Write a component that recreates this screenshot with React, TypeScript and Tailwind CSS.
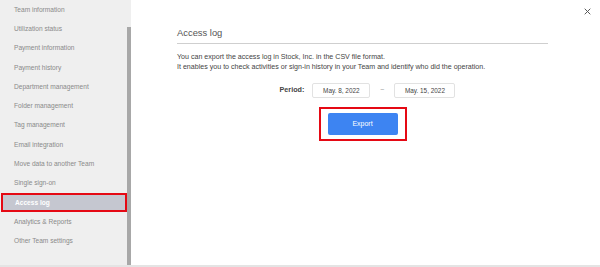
const menuItems = [
  "Team information",
  "Utilization status",
  "Payment information",
  "Payment history",
  "Department management",
  "Folder management",
  "Tag management",
  "Email integration",
  "Move data to another Team",
  "Single sign-on",
  "Access log",
  "Analytics & Reports",
  "Other Team settings",
];

export default function App() {
  const active = "Access log";

  return (
    <div
      className="flex h-[267px] w-[600px] overflow-hidden bg-white border-b-2 border-[#e4e4e4]"
      style={{ fontFamily: '"Liberation Sans", Arial, sans-serif' }}
    >
      {/* Sidebar */}
      <div className="relative flex w-[131px] shrink-0 bg-[#efefef]">
        <ul className="flex w-[127px] flex-col">
          {menuItems.map((item) =>
            item === active ? (
              <li
                key={item}
                className="ml-px flex h-[19.3px] items-center border-2 border-[#e50914] bg-[#c5c7d0] pl-[12px] text-[6.6px] font-bold text-white"
              >
                {item}
              </li>
            ) : (
              <li
                key={item}
                className="flex h-[19.3px] items-center pl-[14px] text-[6.6px] text-[#8a8a8a]"
              >
                {item}
              </li>
            )
          )}
        </ul>
        <div className="mt-[27px] w-[4px] bg-[#a8a8a8]" />
      </div>

      {/* Main */}
      <div className="relative flex-1">
        <button className="absolute right-[9px] top-[7px] flex h-[8px] w-[8px] items-center justify-center text-[#555]">
          <svg viewBox="0 0 10 10" className="h-[7px] w-[7px]">
            <path d="M1 1 L9 9 M9 1 L1 9" stroke="currentColor" strokeWidth="1.4" />
          </svg>
        </button>

        <div className="ml-[46px] mt-[27px] w-[371px]">
          <h2 className="border-b border-[#cfcfcf] pb-[4px] text-[9.4px] leading-[12px] text-[#555]">
            Access log
          </h2>
          <div className="mt-[8px] text-[7.1px] leading-[10px] text-[#444]">
            <p>You can export the access log in Stock, Inc. in the CSV file format.</p>
            <p>It enables you to check activities or sign-in history in your Team and identify who did the operation.</p>
          </div>

          <div className="mt-[11px] flex items-center justify-center pl-[10px]">
            <span className="mr-[8px] text-[7.2px] font-bold text-[#444]">Period:</span>
            <div className="flex h-[15px] w-[58px] items-center justify-center rounded-[2px] border border-[#e2e2e2] text-[6.4px] text-[#444]">
              May. 8, 2022
            </div>
            <span className="mx-[10px] text-[7px] text-[#999]">~</span>
            <div className="flex h-[15px] w-[61px] items-center justify-center rounded-[2px] border border-[#e2e2e2] text-[6.4px] text-[#444]">
              May. 15, 2022
            </div>
          </div>

          <div className="mt-[9px] flex justify-center">
            <div className="border-2 border-[#e50914] px-[7px] py-[4px]">
              <button className="flex h-[22px] w-[70px] items-center justify-center rounded-[2px] bg-[#3d84f2] text-[7px] text-white">
                Export
              </button>
            </div>
          </div>
        </div>
      </div>
    </div>
  );
}
